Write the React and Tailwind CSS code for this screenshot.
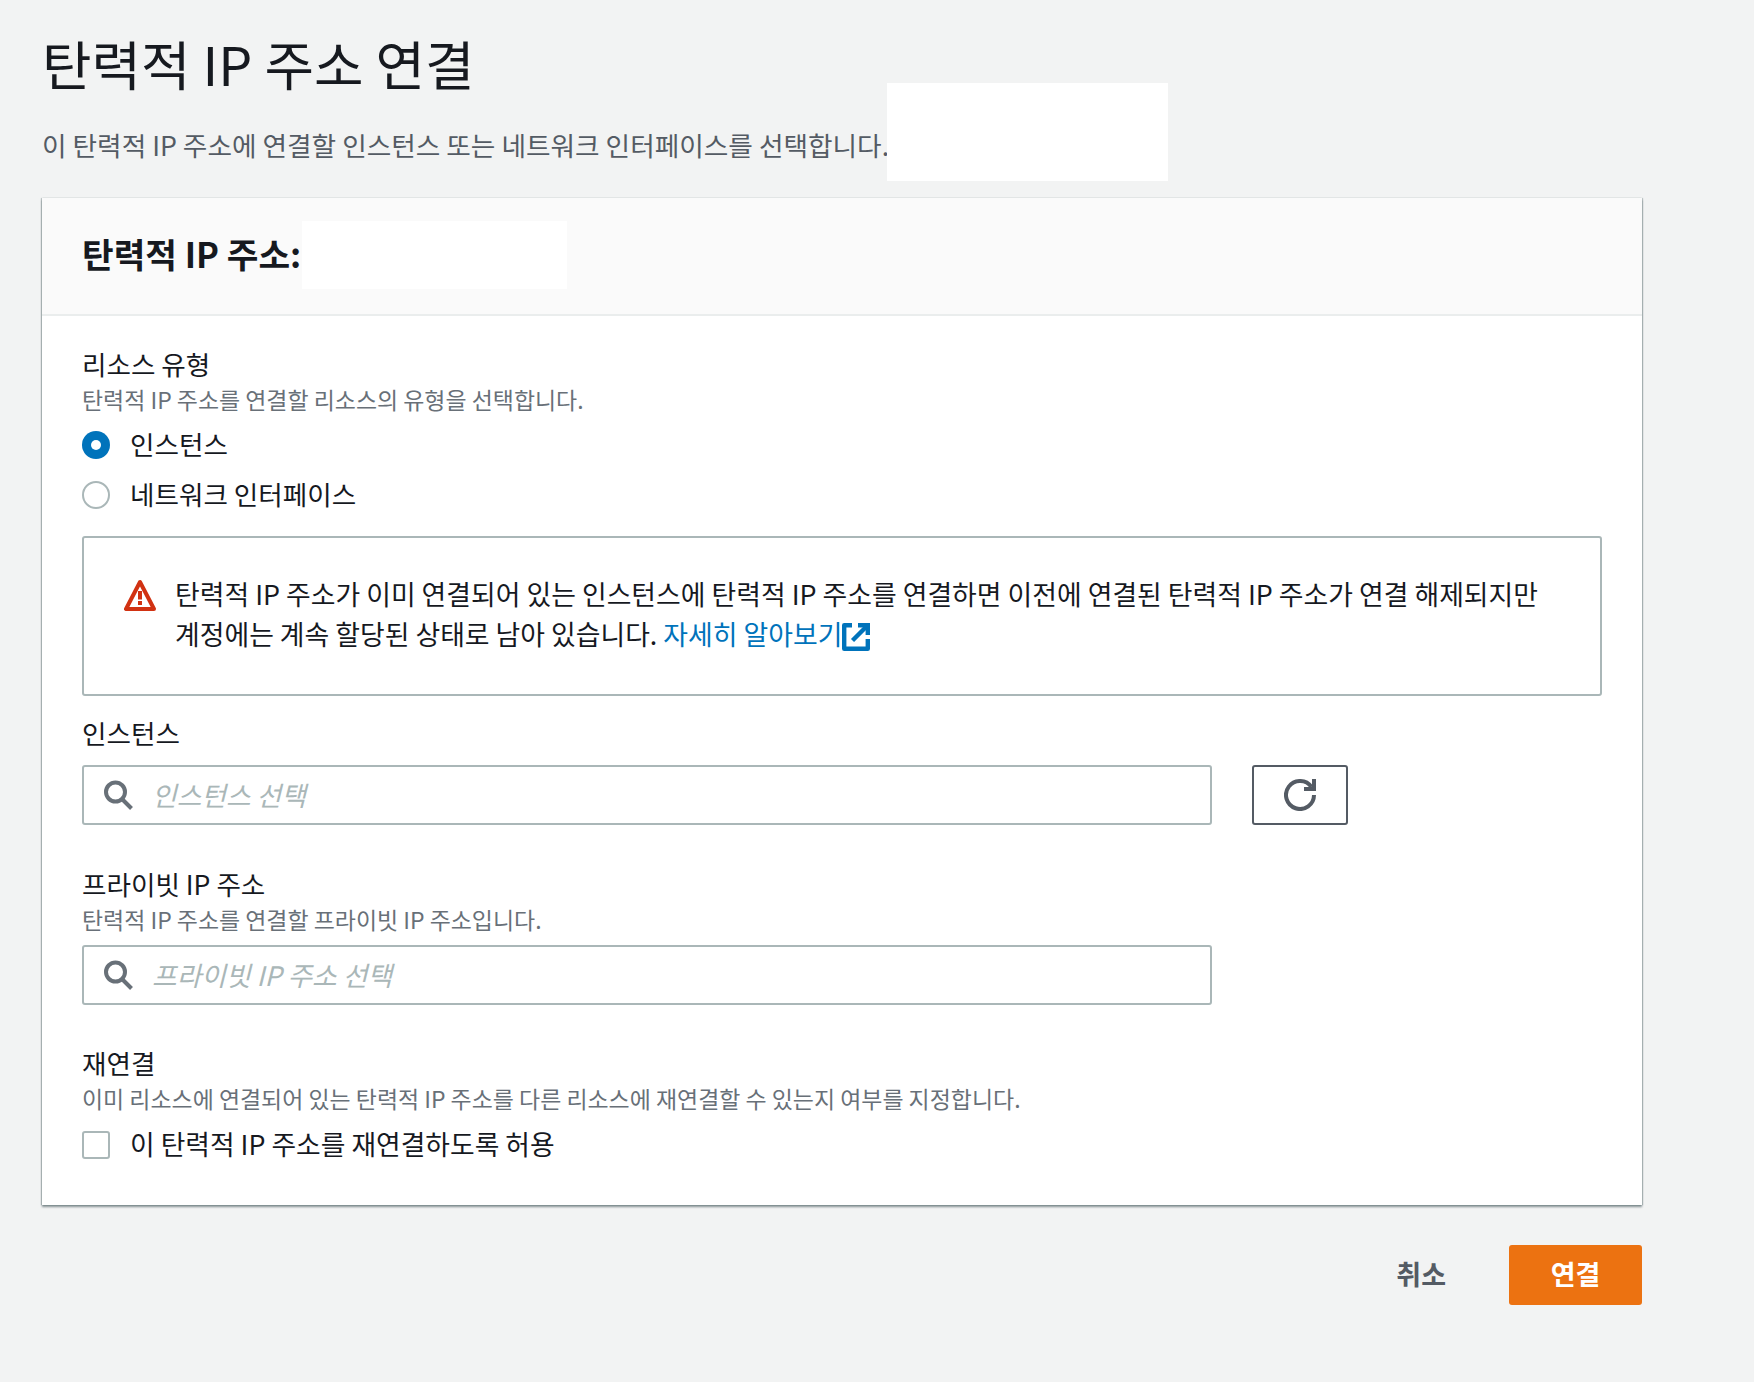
const FONT = { fontFamily: '"Noto Sans CJK KR", "Noto Sans", sans-serif' };

function SearchIcon() {
  return (
    <svg width="30" height="32" viewBox="0 0 30 32" fill="none" className="shrink-0">
      <circle cx="12.5" cy="13" r="9.5" stroke="#687078" strokeWidth="4" />
      <path d="M19.5 20.5l9 9" stroke="#687078" strokeWidth="4" />
    </svg>
  );
}

function RefreshIcon() {
  return (
    <svg width="32" height="32" viewBox="0 0 32 32" fill="none">
      <path d="M27.5 8A14 14 0 1 0 30 16" stroke="#545b64" strokeWidth="4" />
      <path d="M28 0h4v12H20V8h8z" fill="#545b64" />
    </svg>
  );
}

function WarningIcon() {
  return (
    <svg width="32" height="32" viewBox="0 0 32 32" fill="none" className="shrink-0">
      <path d="M16 3L2 30h28z" stroke="#d13212" strokeWidth="4" strokeLinejoin="round" />
      <rect x="14" y="12" width="4" height="8.5" fill="#d13212" />
      <rect x="14" y="22" width="4" height="4" fill="#d13212" />
    </svg>
  );
}

function ExternalIcon() {
  return (
    <svg width="28" height="28" viewBox="0 0 28 28" fill="none" className="inline-block align-[-6px]">
      <path d="M10 2.2H2.2v23.6h23.6V16" stroke="#0073bb" strokeWidth="4.4" strokeLinejoin="round" />
      <path d="M16 2.2h9.8V12" stroke="#0073bb" strokeWidth="4.4" />
      <path d="M25 3L10.5 17.5" stroke="#0073bb" strokeWidth="4.4" />
    </svg>
  );
}

function SearchInput({ placeholder }) {
  return (
    <div className="flex h-[60px] w-[1130px] items-center rounded-[3px] border-2 border-[#aab7b8] bg-white pl-[19px]">
      <SearchIcon />
      <span className="ml-[19px] text-[26.8px] italic text-[#aab7b8]">{placeholder}</span>
    </div>
  );
}

function Label({ children }) {
  return <div className="h-[38px] text-[26.6px] leading-[38px] text-[#16191f]">{children}</div>;
}

function Desc({ children }) {
  return <div className="h-[34px] text-[22.95px] leading-[32px] text-[#687078]">{children}</div>;
}

export default function App() {
  return (
    <div style={FONT} className="min-h-[1382px] bg-[#f2f3f3] pl-[42px] pt-[24px]">
      <div className="w-[1600px]">
        <h1 className="h-[80px] text-[53.8px] font-normal leading-[78px] text-[#16191f]">탄력적 IP 주소 연결</h1>

        <div className="relative mt-[6px] h-[68px]">
          <p className="text-[26.7px] leading-[70px] text-[#545b64]">
            이 탄력적 IP 주소에 연결할 인스턴스 또는 네트워크 인터페이스를 선택합니다.
          </p>
          <div className="absolute left-[845px] top-[-27px] h-[98px] w-[281px] bg-white" />
        </div>

        <div className="mt-[20px] bg-white shadow-[0_2px_2px_rgba(0,28,36,0.45),1px_0_1px_rgba(0,28,36,0.2),-1px_0_1px_rgba(0,28,36,0.2)]">
          <div className="relative flex h-[118px] items-center border-b-2 border-[#eaeded] bg-[#fafafa] px-[40px]">
            <h2 className="pb-[4px] text-[34.4px] font-bold text-[#16191f]">탄력적 IP 주소:</h2>
            <div className="absolute left-[260px] top-[23px] h-[68px] w-[265px] bg-white" />
          </div>

          <div className="px-[40px] pt-[29px] pb-[40px]">
            <Label>리소스 유형</Label>
            <Desc>탄력적 IP 주소를 연결할 리소스의 유형을 선택합니다.</Desc>

            <div className="mt-[3px] flex h-[50px] items-center">
              <span className="flex h-[28px] w-[28px] items-center justify-center rounded-full bg-[#0073bb]">
                <span className="h-[10px] w-[10px] rounded-full bg-white" />
              </span>
              <span className="ml-[20px] pb-[2px] text-[26.6px] text-[#16191f]">인스턴스</span>
            </div>
            <div className="flex h-[50px] items-center">
              <span className="h-[28px] w-[28px] rounded-full border-2 border-[#aab7b8] bg-white" />
              <span className="ml-[20px] pb-[2px] text-[26.6px] text-[#16191f]">네트워크 인터페이스</span>
            </div>

            <div className="mt-[16px] flex h-[160px] w-[1520px] items-start rounded-[3px] border-2 border-[#aab7b8] bg-white pl-[40px] pt-[36px]">
              <div className="mt-[5px]"><WarningIcon /></div>
              <p className="ml-[19px] text-[26.87px] leading-[39.5px] text-[#16191f]">
                탄력적 IP 주소가 이미 연결되어 있는 인스턴스에 탄력적 IP 주소를 연결하면 이전에 연결된 탄력적 IP 주소가 연결 해제되지만
                <br />
                계정에는 계속 할당된 상태로 남아 있습니다. <span className="text-[#0073bb]">자세히 알아보기</span>
                <ExternalIcon />
              </p>
            </div>

            <div className="mt-[18px]"><Label>인스턴스</Label></div>
            <div className="mt-[13px] flex items-center gap-[40px]">
              <SearchInput placeholder="인스턴스 선택" />
              <div className="flex h-[60px] w-[96px] items-center justify-center rounded-[3px] border-2 border-[#545b64] bg-white">
                <RefreshIcon />
              </div>
            </div>

            <div className="mt-[40px]"><Label>프라이빗 IP 주소</Label></div>
            <Desc>탄력적 IP 주소를 연결할 프라이빗 IP 주소입니다.</Desc>
            <div className="mt-[8px]"><SearchInput placeholder="프라이빗 IP 주소 선택" /></div>

            <div className="mt-[39px]"><Label>재연결</Label></div>
            <Desc>이미 리소스에 연결되어 있는 탄력적 IP 주소를 다른 리소스에 재연결할 수 있는지 여부를 지정합니다.</Desc>
            <div className="mt-[9px] flex h-[40px] items-center">
              <span className="h-[28px] w-[28px] rounded-[3px] border-2 border-[#aab7b8] bg-white" />
              <span className="ml-[20px] pb-[2px] text-[26.8px] text-[#16191f]">이 탄력적 IP 주소를 재연결하도록 허용</span>
            </div>
          </div>
        </div>

        <div className="mt-[40px] flex items-center justify-end">
          <button className="mr-[63px] pb-[2px] text-[27px] font-bold text-[#545b64]">취소</button>
          <button className="h-[60px] w-[133px] rounded-[3px] bg-[#ec7211] pb-[2px] text-[27px] font-bold text-white">연결</button>
        </div>
      </div>
    </div>
  );
}
